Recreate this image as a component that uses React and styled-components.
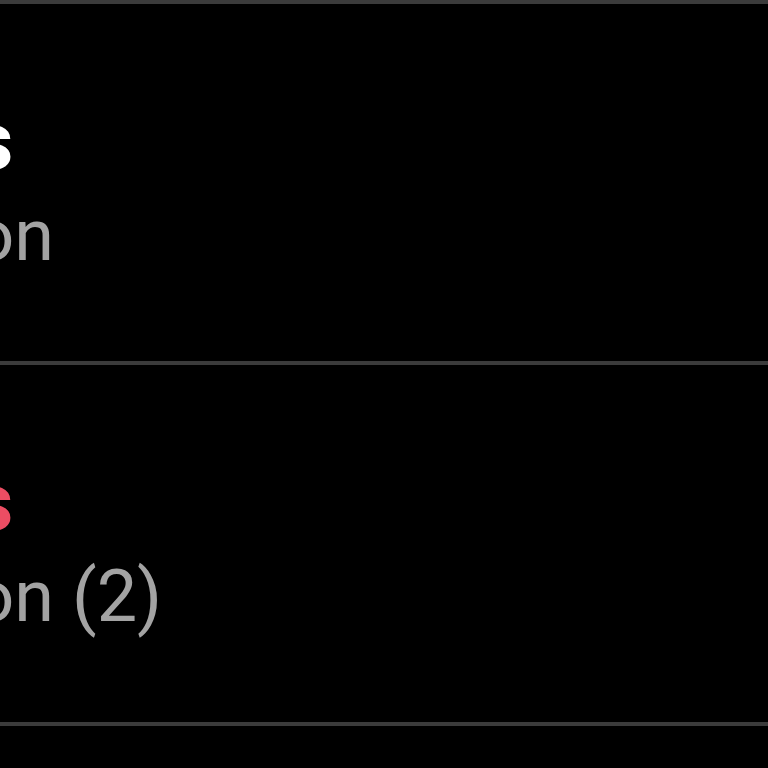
import React from "react";
import styled, { createGlobalStyle } from "styled-components";

const GlobalStyle = createGlobalStyle`
  html, body {
    margin: 0;
    padding: 0;
    background: #000;
    overflow: hidden;
  }
  body {
    font-family: Roboto, "Noto Sans", sans-serif;
  }
`;

const items = [
  { title: "Contacts", subtitle: "Notification", alert: false },
  { title: "Contacts", subtitle: "Notification (2)", alert: true },
];

const List = styled.ul`
  list-style: none;
  margin: 0;
  padding: 0;
  width: 768px;
  height: 768px;
  overflow: hidden;
  background: #000;
`;

const Row = styled.li`
  display: flex;
  flex-direction: column;
  justify-content: flex-start;
  box-sizing: border-box;
  height: 361px;
  padding-top: 82px;
  border-top: 4px solid #3b3b3b;
  overflow: hidden;
`;

const TextBlock = styled.div`
  display: flex;
  flex-direction: column;
  margin-left: -318px;
  white-space: nowrap;
`;

const Title = styled.span`
  margin-top: 7px;
  font-size: 81px;
  line-height: 98px;
  font-weight: 700;
  letter-spacing: 0.75px;
  color: ${(p) => (p.$alert ? "#ec4d63" : "#ffffff")};
`;

const Subtitle = styled.span`
  margin-top: -3px;
  font-size: 72px;
  line-height: 95px;
  color: #a3a3a3;
`;

export default function App() {
  return (
    <>
      <GlobalStyle />
      <List>
        {items.map((item, i) => (
          <Row key={i}>
            <TextBlock>
              <Title $alert={item.alert}>{item.title}</Title>
              <Subtitle>{item.subtitle}</Subtitle>
            </TextBlock>
          </Row>
        ))}
        <Row />
      </List>
    </>
  );
}
